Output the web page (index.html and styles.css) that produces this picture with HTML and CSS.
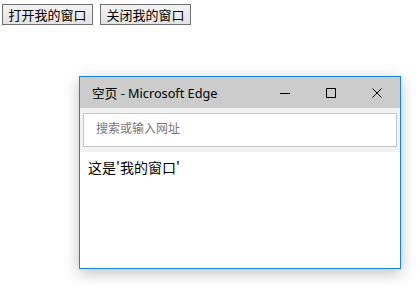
FILE: index.html
```html
<!DOCTYPE html>
<html lang="zh">
  <head>
    <meta charset="UTF-8" />
    <title>打开我的窗口</title>
    <link rel="stylesheet" href="styles.css">
  </head>
  <body>
    <div class="toolbar">
      <button class="btn">打开我的窗口</button>
      <button class="btn">关闭我的窗口</button>
    </div>

    <!-- 弹出的浏览器窗口 -->
    <div class="popup">
      <div class="titlebar">
        <span class="title">空页 - Microsoft Edge</span>
        <div class="controls">
          <span class="ctl">
            <svg width="10" height="10" viewBox="0 0 10 10"><path d="M0 5.5h10" stroke="#000" stroke-width="1"/></svg>
          </span>
          <span class="ctl">
            <svg width="10" height="10" viewBox="0 0 10 10"><rect x="0.5" y="0.5" width="9" height="9" fill="none" stroke="#000" stroke-width="1"/></svg>
          </span>
          <span class="ctl">
            <svg width="10" height="10" viewBox="0 0 10 10"><path d="M0.5 0.5l9 9M9.5 0.5l-9 9" stroke="#000" stroke-width="1"/></svg>
          </span>
        </div>
      </div>
      <div class="addressbar">
        <div class="address">搜索或输入网址</div>
      </div>
      <div class="content">这是'我的窗口'</div>
    </div>
  </body>
</html>
```

FILE: styles.css
```css
* {
  box-sizing: border-box;
}
body {
  margin: 0;
  background: #fff;
  font-family: "Noto Sans CJK SC", sans-serif;
  width: 417px;
  height: 285px;
  overflow: hidden;
  position: relative;
}
.toolbar {
  display: flex;
  gap: 7px;
  padding: 4px 0 0 2px;
}
.btn {
  width: 91px;
  height: 21px;
  padding: 0;
  font-family: "Noto Sans CJK SC", sans-serif;
  font-size: 13px;
  line-height: 19px;
  color: #000;
  background: linear-gradient(#f2f2f2, #e3e3e3);
  border: 1px solid #707070;
  border-radius: 0;
}
.popup {
  position: absolute;
  left: 79px;
  top: 76px;
  width: 322px;
  height: 193px;
  border: 1px solid #1883d7;
  background: #fff;
  box-shadow: 0 4px 14px rgba(0, 0, 0, 0.25);
  display: flex;
  flex-direction: column;
}
.titlebar {
  height: 31px;
  background: #cccccc;
  display: flex;
  align-items: center;
  justify-content: space-between;
  padding-left: 12px;
}
.title {
  font-family: "Noto Sans", "Noto Sans CJK SC", sans-serif;
  font-size: 12.7px;
  color: #000;
}
.controls {
  display: flex;
  height: 100%;
}
.ctl {
  width: 46px;
  display: flex;
  align-items: center;
  justify-content: center;
}
.addressbar {
  background: #f1f1f1;
  padding: 5px 3px 5px 3px;
}
.address {
  height: 34px;
  border: 1px solid #c8c8c8;
  background: #fff;
  padding-left: 12px;
  font-size: 12px;
  line-height: 28px;
  color: #777;
}
.content {
  flex: 1;
  padding: 5px 8px;
  font-size: 14px;
  line-height: 20px;
  color: #000;
}
```
